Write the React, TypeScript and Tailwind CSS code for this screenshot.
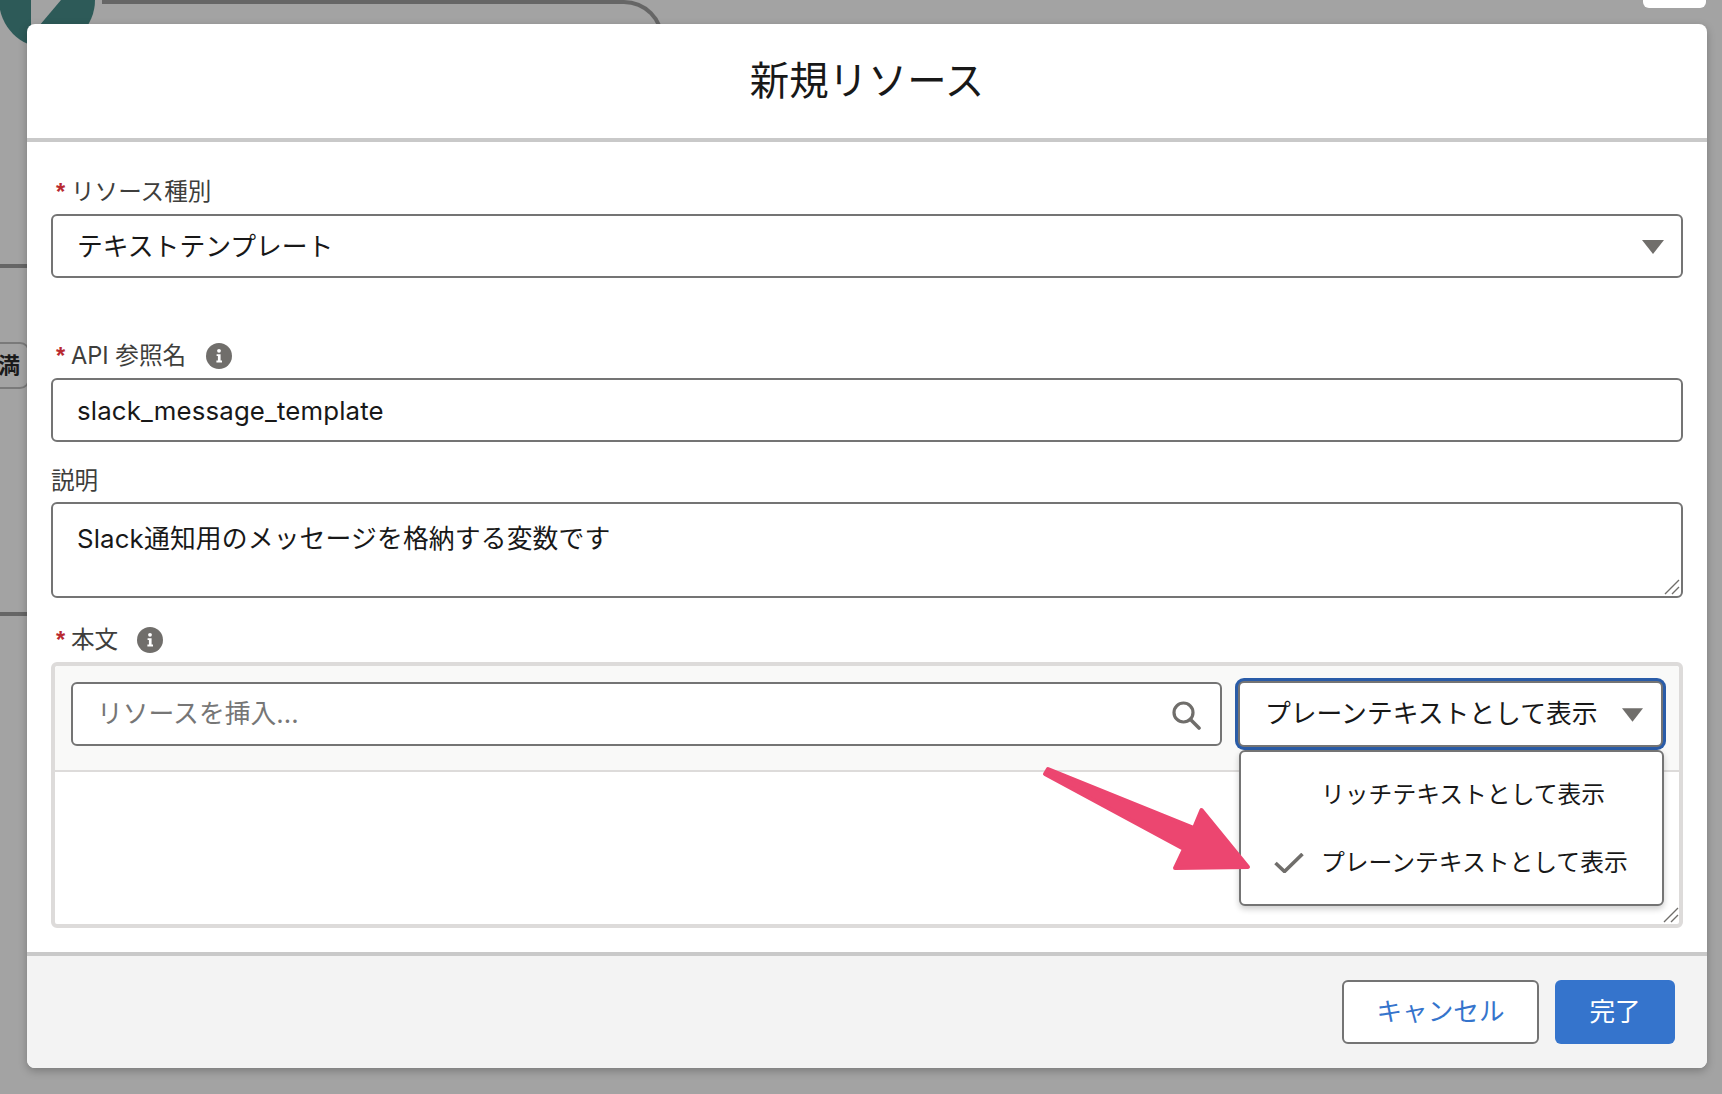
const font = { fontFamily: 'Inter, "Noto Sans CJK JP", sans-serif' };

const Caret = ({ className }: { className: string }) => (
  <svg viewBox="0 0 22 14" className={className}>
    <path d="M0 0H22L11 14Z" fill="#706e6b" />
  </svg>
);

const InfoIcon = () => (
  <svg viewBox="0 0 26 26" className="w-[26px] h-[26px] shrink-0">
    <circle cx="13" cy="13" r="13" fill="#706e6b" />
    <circle cx="13" cy="7.8" r="1.9" fill="#fff" />
    <path d="M10.6 11.2H14.6V17.6H16V19.4H10.4V17.6H11.9V13H10.6Z" fill="#fff" />
  </svg>
);

const Resize = ({ className }: { className: string }) => (
  <svg viewBox="0 0 16 16" className={className}>
    <path d="M1 15L15 1M8 15L15 8" stroke="#706e6b" strokeWidth="1.4" fill="none" />
  </svg>
);

const Label = ({ text, required, info, gap }: { text: string; required?: boolean; info?: boolean; gap?: string }) => (
  <div className="flex items-center h-[32px] text-[23.6px] text-[#3e3e3c]">
    {required && <span className="w-[20px] pl-[5px] text-[#b92a30] font-bold leading-none mt-[2px]" style={{ fontFamily: '"Liberation Sans", sans-serif' }}>*</span>}
    <span>{text}</span>
    {info && <span className={gap}><InfoIcon /></span>}
  </div>
);

export default function App() {
  return (
    <div style={font} className="relative w-[1722px] h-[1094px] overflow-hidden bg-[#a3a3a3] pt-[24px] pl-[27px]">
      {/* stuff behind the dim layer */}
      <div className="absolute -left-[1px] -top-[48px] w-[96px] h-[96px] rounded-full bg-[#2d5a58]" />
      <svg viewBox="0 0 30 26" className="absolute left-[31px] top-0 w-[30px] h-[26px]">
        <path d="M30 0H16L0 0V26H8Z" fill="#a3a3a3" />
      </svg>
      <div className="absolute left-[102px] top-0 w-[562px] h-[80px] border-[4px] border-l-0 border-[#666666] rounded-tr-[40px]" />
      <div className="absolute left-0 top-[264px] w-[27px] h-[4px] bg-[#666666]" />
      <div className="absolute left-0 top-[612px] w-[27px] h-[4px] bg-[#666666]" />
      <div className="absolute -left-[20px] top-[342px] w-[50px] h-[47px] rounded-[10px] border-2 border-[#7a7a7a] flex items-center justify-end pr-[8px] text-[22px] font-bold text-[#1a1a1a]">満</div>
      <div className="absolute left-[1643px] top-0 w-[63px] h-[8px] bg-white rounded-b-[6px]" />

      <div className="relative w-[1680px] h-[1044px] rounded-[8px] overflow-hidden bg-white shadow-[0_3px_8px_rgba(0,0,0,0.25)] flex flex-col">
        <div className="h-[118px] shrink-0 border-b-[4px] border-[#c9c9c9] flex items-center justify-center pt-[2px] text-[39.4px] text-[#181818]">新規リソース</div>

        <div className="flex-1 px-[24px] pt-[34px]">
          <Label text="リソース種別" required />
          <div className="mt-[6px] h-[64px] rounded-[6px] border-2 border-[#747474] flex items-center justify-between pl-[24px] pr-[17px] pt-[2px] text-[25.8px] text-[#181818]">
            <span>テキストテンプレート</span>
            <Caret className="w-[22px] h-[14px]" />
          </div>

          <div className="mt-[62px]">
            <Label text="API 参照名" required info gap="ml-[20px]" />
          </div>
          <div className="mt-[6px] h-[64px] rounded-[6px] border-2 border-[#747474] flex items-center pl-[24px] pt-[2px] text-[25.8px] tracking-[0.15px] text-[#181818]">slack_message_template</div>

          <div className="mt-[23px]">
            <Label text="説明" />
          </div>
          <div className="relative mt-[5px] h-[96px] rounded-[6px] border-2 border-[#747474] pl-[24px] pt-[18px] text-[25.8px] tracking-[0.15px] leading-[34px] text-[#181818]">
            Slack通知用のメッセージを格納する変数です
            <Resize className="absolute right-[1px] bottom-[1px] w-[16px] h-[16px]" />
          </div>

          <div className="mt-[26px]">
            <Label text="本文" required info gap="ml-[19px]" />
          </div>
          <div className="relative mt-[6px] h-[266px] rounded-[6px] border-[4px] border-[#dddbda]">
            <div className="h-[106px] bg-[#f9f9f8] border-b-2 border-[#dddbda] flex items-start pt-[16px] pl-[16px] pr-[16px] gap-[16px] rounded-t-[4px]">
              <div className="flex-1 h-[64px] rounded-[6px] border-2 border-[#747474] bg-white flex items-center justify-between pl-[24px] pr-[19px] text-[25.8px] text-[#767676]">
                <span>リソースを挿入...</span>
                <svg viewBox="0 0 30 30" className="w-[30px] h-[30px] mt-[2px]">
                  <circle cx="12.5" cy="12.5" r="9.5" fill="none" stroke="#706e6b" strokeWidth="3.2" />
                  <path d="M19.5 19.5L28 28" stroke="#706e6b" strokeWidth="3.6" strokeLinecap="round" />
                </svg>
              </div>
              <div className="relative w-[425px] shrink-0 h-[66px] -mt-[1px]">
                <div className="h-full rounded-[6px] border-2 border-[#747474] bg-white shadow-[0_0_0_3px_#2a5ca8] flex items-center justify-between pl-[25px] pr-[18px] text-[25.8px] text-[#181818]">
                  <span>プレーンテキストとして表示</span>
                  <Caret className="w-[21px] h-[14px] mt-[2px]" />
                </div>
                <div className="absolute left-[1px] top-[69px] w-[425px] h-[156px] z-10 rounded-[6px] border-2 border-[#747474] bg-white shadow-[0_3px_6px_rgba(0,0,0,0.2)] flex flex-col text-[23.8px] text-[#181818]">
                  <div className="h-[68px] mt-[9px] flex items-center pl-[80px]">リッチテキストとして表示</div>
                  <div className="h-[68px] flex items-center pl-[33px]">
                    <svg viewBox="0 0 30 20" className="w-[30px] h-[20px] shrink-0">
                      <path d="M1.5 10L10.5 18.5L28.5 1" fill="none" stroke="#706e6b" strokeWidth="3.6" />
                    </svg>
                    <span className="ml-[17px]">プレーンテキストとして表示</span>
                  </div>
                </div>
              </div>
            </div>
            <Resize className="absolute right-[0px] bottom-[1px] w-[16px] h-[16px]" />
          </div>
        </div>

        <div className="h-[116px] shrink-0 border-t-[4px] border-[#c9c9c9] bg-[#f3f3f3] flex items-start justify-end pt-[24px] pr-[32px] gap-[16px] text-[25.6px]">
          <div className="w-[197px] h-[64px] rounded-[6px] border-2 border-[#747474] bg-white text-[#3574cc] flex items-center justify-center">キャンセル</div>
          <div className="w-[120px] h-[64px] rounded-[6px] bg-[#3574cc] text-white flex items-center justify-center">完了</div>
        </div>
      </div>

      {/* annotation arrow */}
      <svg viewBox="0 0 1722 1094" className="absolute inset-0 w-[1722px] h-[1094px] pointer-events-none z-20">
        <path d="M1048 769L1194 828L1201.5 810L1248 867L1175 868L1184 849L1045 774Z" fill="#ec4670" stroke="#ec4670" strokeWidth="4" strokeLinejoin="round" />
      </svg>
    </div>
  );
}
